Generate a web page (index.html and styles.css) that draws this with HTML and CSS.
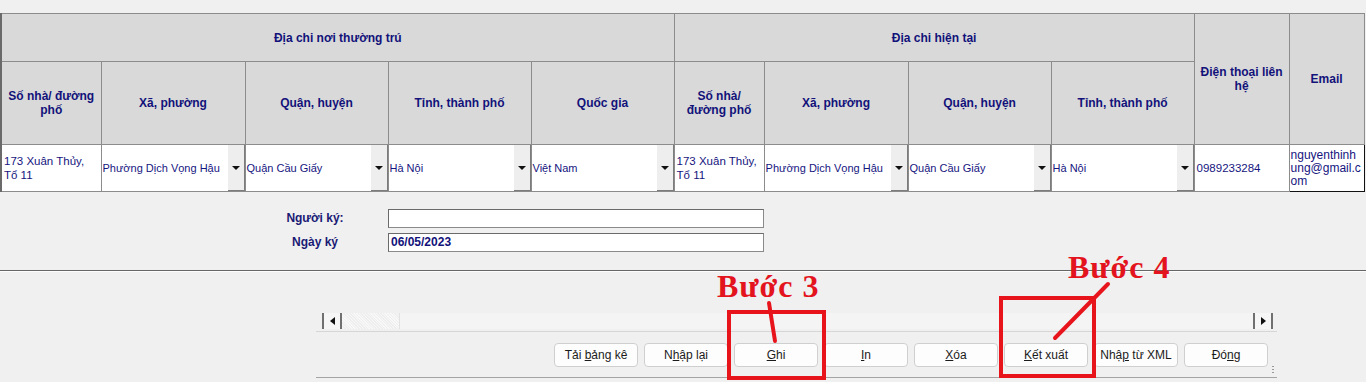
FILE: index.html
```html
<!DOCTYPE html>
<html lang="vi">
<head>
  <meta charset="UTF-8" />
  <title>Tờ khai - Địa chỉ</title>
  <link rel="stylesheet" href="styles.css">
</head>
<body>
  <div class="top-gap"></div>

  <table class="grid">
    <colgroup>
      <col style="width:100px"><col style="width:144px"><col style="width:143px"><col style="width:143px"><col style="width:143px">
      <col style="width:90px"><col style="width:144px"><col style="width:143px"><col style="width:143px">
      <col style="width:95px"><col style="width:75px">
    </colgroup>
    <tr class="head1">
      <th colspan="5" class="first">Địa chi nơi thường trú</th>
      <th colspan="4">Địa chi hiện tại</th>
      <th rowspan="2">Điện thoại liên hệ</th>
      <th rowspan="2">Email</th>
    </tr>
    <tr class="head2">
      <th class="first">Số nhà/ đường phố</th>
      <th>Xã, phường</th>
      <th>Quận, huyện</th>
      <th>Tỉnh, thành phố</th>
      <th>Quốc gia</th>
      <th>Số nhà/ đường phố</th>
      <th>Xã, phường</th>
      <th>Quận, huyện</th>
      <th>Tỉnh, thành phố</th>
    </tr>
    <tr class="data">
      <td class="first">173 Xuân Thủy, Tổ 11</td>
      <td class="combo-cell"><div class="combo"><span class="combo-text">Phường Dịch Vọng Hậu</span><span class="drop"></span></div></td>
      <td class="combo-cell"><div class="combo"><span class="combo-text">Quận Cầu Giấy</span><span class="drop"></span></div></td>
      <td class="combo-cell"><div class="combo"><span class="combo-text">Hà Nội</span><span class="drop"></span></div></td>
      <td class="combo-cell"><div class="combo"><span class="combo-text">Việt Nam</span><span class="drop"></span></div></td>
      <td>173 Xuân Thủy, Tổ 11</td>
      <td class="combo-cell"><div class="combo"><span class="combo-text">Phường Dịch Vọng Hậu</span><span class="drop"></span></div></td>
      <td class="combo-cell"><div class="combo"><span class="combo-text">Quận Cầu Giấy</span><span class="drop"></span></div></td>
      <td class="combo-cell"><div class="combo"><span class="combo-text">Hà Nội</span><span class="drop"></span></div></td>
      <td>0989233284</td>
      <td class="email">nguyenthinhung@gmail.com</td>
    </tr>
  </table>

  <div class="sign">
    <label class="sign-label">Người ký:</label>
    <div class="sign-input"></div>
    <label class="sign-label">Ngày ký</label>
    <div class="sign-input">06/05/2023</div>
  </div>

  <div class="rule"></div>

  <div class="footer">
    <div class="hscroll">
      <span class="arrow arrow-left"></span>
      <span class="thumb"></span>
      <span class="track"></span>
      <span class="arrow arrow-right"></span>
    </div>
    <div class="scroll-line"></div>
    <div class="buttons">
      <button class="btn">Tải <u>b</u>ảng kê</button>
      <button class="btn">N<u>h</u>ập lại</button>
      <button class="btn"><u>G</u>hi</button>
      <button class="btn"><u>I</u>n</button>
      <button class="btn"><u>X</u>óa</button>
      <button class="btn"><u>K</u>ết xuất</button>
      <button class="btn">Nhậ<u>p</u> từ XML</button>
      <button class="btn">Đó<u>n</u>g</button>
    </div>
    <div class="bottom-line"></div>
    <span class="grip"></span>
  </div>

  <!-- tutorial annotations -->
  <div class="note note-3">Bước 3</div>
  <div class="note note-4">Bước 4</div>
  <svg class="marks" width="1366" height="382" viewBox="0 0 1366 382">
    <rect x="729" y="312" width="95" height="66" />
    <line x1="769" y1="303" x2="775" y2="341" />
    <rect x="1001" y="298" width="93" height="78" />
    <line x1="1055" y1="338" x2="1108" y2="284" />
  </svg>
</body>
</html>
```

FILE: styles.css
```css
body {
  margin: 0;
  width: 1366px;
  height: 382px;
  overflow: hidden;
  position: relative;
  background: #f0f0f0;
  font-family: "Liberation Sans", Arial, sans-serif;
  color: #151580;
}

.top-gap {
  height: 13px;
}

/* address grid */
.grid {
  border-collapse: collapse;
  table-layout: fixed;
  width: 1363px;
}

.grid th,
.grid td {
  border: 1px solid #8c8c8c;
  overflow: hidden;
}

.grid .first {
  border-left: 2px solid #6a6a6a;
}

.grid th {
  background: #d9d9d9;
  color: #12127a;
  font-size: 12px;
  font-weight: bold;
  line-height: 14px;
  padding: 0 4px;
}

.head1 { height: 48px; }
.head2 { height: 83px; }
.data { height: 46px; }

.grid td {
  background: #ffffff;
  font-size: 11.5px;
  line-height: 14px;
  padding: 0 2px;
  vertical-align: middle;
}

.grid td.combo-cell {
  padding: 0;
}

.combo {
  display: flex;
  align-items: stretch;
  height: 46px;
}

.combo-text {
  flex: 1;
  display: flex;
  align-items: center;
  padding-left: 1px;
  font-size: 11px;
  white-space: nowrap;
  overflow: hidden;
}

.drop {
  width: 16px;
  background: #eeeeee;
  border-right: 1px solid #7c7c7c;
  border-bottom: 1px solid #7c7c7c;
  display: flex;
  align-items: center;
  justify-content: center;
}

.drop::after {
  content: "";
  border-left: 4px solid transparent;
  border-right: 4px solid transparent;
  border-top: 4px solid #111;
}

.grid td.email {
  border: 1px solid #111;
  word-break: break-all;
  font-size: 12px;
  line-height: 13px;
  padding: 0 1px;
}

/* signer */
.sign {
  display: grid;
  grid-template-columns: 100px 376px;
  align-content: start;
  column-gap: 23px;
  row-gap: 5px;
  padding: 17px 0 0 265px;
  height: 61px;
}

.sign-label {
  text-align: center;
  font-size: 12px;
  font-weight: bold;
  line-height: 19px;
  color: #1a1a75;
}

.sign-input {
  height: 17px;
  background: #fff;
  border: 1px solid #8a8a8a;
  border-top-color: #6a6a6a;
  border-left-color: #6a6a6a;
  font-size: 12px;
  font-weight: bold;
  line-height: 17px;
  padding-left: 2px;
  color: #12127a;
}

.rule {
  border-top: 1px solid #666;
  border-bottom: 1px solid #fdfdfd;
}

/* bottom toolbar */
.footer {
  position: relative;
  width: 961px;
  margin-left: 316px;
  padding-top: 41px;
}

.hscroll {
  display: flex;
  height: 16px;
  margin-left: 6px;
  width: 951px;
  background: #f4f4f4;
}

.arrow {
  width: 16px;
  display: flex;
  align-items: center;
  justify-content: center;
  border-left: 2px solid #707070;
  border-right: 2px solid #707070;
  background: #f6f6f6;
}

.arrow-left::after {
  content: "";
  border-top: 4px solid transparent;
  border-bottom: 4px solid transparent;
  border-right: 5px solid #111;
}

.arrow-right::after {
  content: "";
  border-top: 4px solid transparent;
  border-bottom: 4px solid transparent;
  border-left: 5px solid #111;
}

.thumb {
  width: 57px;
  background: repeating-linear-gradient(45deg, #eeeeee 0 1px, #f8f8f8 1px 2px);
}

.track {
  flex: 1;
  border-left: 1px solid #e2e2e2;
}

.scroll-line {
  margin-top: 2px;
  border-top: 1px solid #d6d6d6;
}

.buttons {
  display: flex;
  justify-content: flex-end;
  gap: 6px;
  margin-top: 11px;
  padding-right: 9px;
}

.btn {
  width: 84px;
  height: 24px;
  background: #fdfdfd;
  border: 1px solid #cfcfcf;
  border-radius: 4px;
  font-family: "Liberation Sans", Arial, sans-serif;
  font-size: 12px;
  color: #1b1b1b;
  padding: 0;
}

.bottom-line {
  margin-top: 10px;
  border-top: 1px solid #a4a4a4;
}

.grip {
  position: absolute;
  right: 3px;
  bottom: 4px;
  width: 2px;
  height: 8px;
  background: repeating-linear-gradient(#999 0 1px, transparent 1px 3px);
}

/* annotations */
.note {
  position: absolute;
  font-family: "Liberation Serif", "Times New Roman", serif;
  font-weight: bold;
  font-size: 32px;
  line-height: 31px;
  letter-spacing: 1px;
  color: #e3141d;
  white-space: nowrap;
}

.note-3 {
  left: 717px;
  top: 271px;
}

.note-4 {
  left: 1068px;
  top: 252px;
}

.marks {
  position: absolute;
  left: 0;
  top: 0;
  pointer-events: none;
}

.marks rect {
  fill: none;
  stroke: #e8141c;
  stroke-width: 4;
}

.marks line {
  stroke: #e8141c;
  stroke-width: 4;
  stroke-linecap: round;
}
```
